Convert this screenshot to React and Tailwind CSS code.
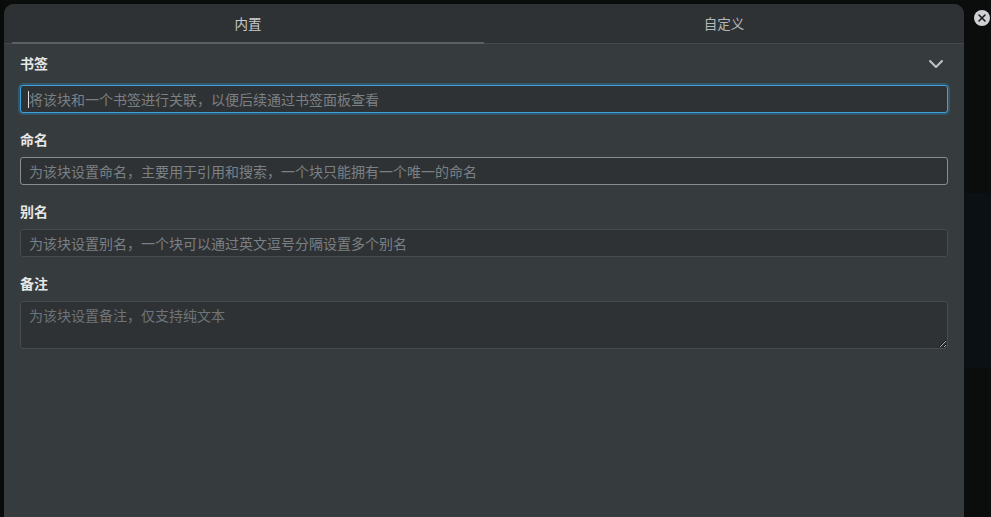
import { ChevronDown, X } from 'lucide-react';

const font = { fontFamily: '"Noto Sans CJK SC", "Noto Sans", sans-serif' };

const Label = ({ children, right }) => (
    <div className="flex items-center justify-between h-[20px] text-[14px] leading-[20px] font-bold text-[#e6e7e8]">
        <span>{children}</span>
        {right}
    </div>
);

export default function App() {
    return (
        <div className="w-[991px] h-[517px] bg-[#0b0c0c] flex overflow-hidden" style={font}>
            <div className="w-[4px] bg-[#090b0b]" />
            <div className="mt-[4px] w-[960px] rounded-t-[10px] bg-[#363b3e] flex flex-col overflow-hidden">
                <div className="h-[40px] bg-[#2e3235] border-b border-[#44494c] flex pl-[8px]">
                    <div className="w-[472px] flex items-center justify-center text-[13.5px] text-[#c9cacb] border-b-2 border-[#5c6064] -mb-px">
                        内置
                    </div>
                    <div className="flex-1 flex items-center justify-center text-[13.5px] text-[#b4b6b8]">
                        自定义
                    </div>
                </div>
                <div className="px-[16px] pt-[9px] flex flex-col">
                    <Label right={<ChevronDown size={24} strokeWidth={2} className="text-[#c0c3c5] mt-[1px]" />}>书签</Label>
                    <div className="relative mt-[12px]">
                        <input
                            className="w-full h-[28px] rounded-[3px] bg-[#2e3235] border border-[#3ba3d9] ring-2 ring-[#33566a] px-[8px] text-[14px] text-[#d0d0d0] placeholder-[#7b8084] outline-none"
                            placeholder="将该块和一个书签进行关联，以便后续通过书签面板查看"
                        />
                        <span className="absolute left-[8px] top-[6px] w-px h-[17px] bg-[#e0e0e0]" />
                    </div>

                    <div className="mt-[16px]">
                        <Label>命名</Label>
                    </div>
                    <input
                        className="mt-[8px] w-full h-[28px] rounded-[3px] bg-[#2e3235] border border-[#898d91] px-[8px] text-[14px] placeholder-[#7b8084] outline-none"
                        placeholder="为该块设置命名，主要用于引用和搜索，一个块只能拥有一个唯一的命名"
                    />

                    <div className="mt-[16px]">
                        <Label>别名</Label>
                    </div>
                    <input
                        className="mt-[8px] w-full h-[28px] rounded-[3px] bg-[#2e3235] border border-[#464b4f] px-[8px] text-[14px] placeholder-[#7b8084] outline-none"
                        placeholder="为该块设置别名，一个块可以通过英文逗号分隔设置多个别名"
                    />

                    <div className="mt-[16px]">
                        <Label>备注</Label>
                    </div>
                    <textarea
                        className="mt-[8px] w-full h-[48px] rounded-[3px] bg-[#2e3235] border border-[#464b4f] px-[8px] py-[3px] text-[14px] leading-[20px] placeholder-[#6f7478] outline-none resize-y block"
                        placeholder="为该块设置备注，仅支持纯文本"
                    />
                </div>
            </div>
            <div className="flex-1 flex flex-col">
                <div className="h-[193px] bg-[#0b0c0c] relative">
                    <div className="absolute left-[10px] top-[10px] w-[16px] h-[16px] rounded-full bg-[#cfd1d2] flex items-center justify-center">
                        <X size={12} strokeWidth={3.2} className="text-[#1b1d1e]" />
                    </div>
                </div>
                <div className="h-[175px] bg-[#0a1013]" />
                <div className="flex-1 bg-[#0b0c0c]" />
            </div>
        </div>
    );
}
